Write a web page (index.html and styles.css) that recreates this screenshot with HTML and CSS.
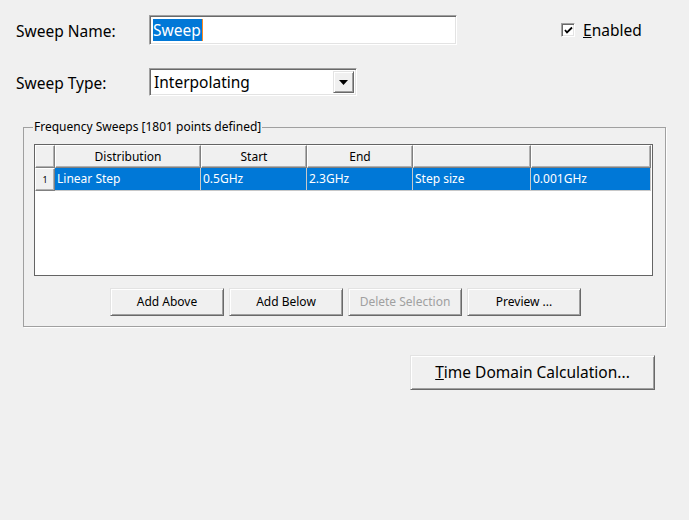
FILE: index.html
```html
<!DOCTYPE html>
<html>
<head>
<meta charset="utf-8">
<link rel="stylesheet" href="styles.css">
</head>
<body>
<div class="dialog">
  <div class="row row-name">
    <span class="label">Sweep Name:</span>
    <div class="edit"><span class="sel">Sweep</span><span class="caret"></span></div>
    <label class="check">
      <span class="box"><svg width="9" height="9" viewBox="0 0 9 9"><path d="M1 4 L3 6.5 L8 1.5" fill="none" stroke="#000" stroke-width="1.8"/></svg></span>
      <span class="check-text"><u>E</u>nabled</span>
    </label>
  </div>
  <div class="row row-type">
    <span class="label">Sweep Type:</span>
    <div class="combo">
      <span class="combo-text">Interpolating</span>
      <span class="drop"><svg width="9" height="5" viewBox="0 0 9 5"><path d="M0 0 H9 L4.5 5 Z" fill="#000"/></svg></span>
    </div>
  </div>
  <fieldset class="group">
    <legend>Frequency Sweeps [1801 points defined]</legend>
    <div class="grid">
      <div class="hdr corner"></div>
      <div class="hdr">Distribution</div>
      <div class="hdr">Start</div>
      <div class="hdr">End</div>
      <div class="hdr"></div>
      <div class="hdr"></div>
      <div class="rowhdr">1</div>
      <div class="cell">Linear Step</div>
      <div class="cell">0.5GHz</div>
      <div class="cell">2.3GHz</div>
      <div class="cell">Step size</div>
      <div class="cell">0.001GHz</div>
    </div>
    <div class="buttons">
      <button class="btn">Add Above</button>
      <button class="btn">Add Below</button>
      <button class="btn disabled">Delete Selection</button>
      <button class="btn">Preview ...</button>
    </div>
  </fieldset>
  <div class="bottom">
    <button class="btn big"><u>T</u>ime Domain Calculation...</button>
  </div>
</div>
</body>
</html>
```
FILE: styles.css
```css
html, body {
  margin: 0;
  padding: 0;
  background: #f0f0f0;
}
body {
  font-family: "Noto Sans", "Open Sans", sans-serif;
  color: #000;
  width: 689px;
  height: 520px;
  overflow: hidden;
}
.dialog {
  padding-top: 15px;
}
.row {
  display: flex;
  align-items: center;
}
.label {
  width: 149px;
  flex-shrink: 0;
  padding-left: 16px;
  font-size: 15.5px;
  box-sizing: border-box;
  position: relative;
  top: 1px;
}
.edit {
  width: 308px;
  height: 30px;
  box-sizing: border-box;
  background: #fff;
  border-top: 1px solid #a0a0a0;
  border-left: 1px solid #a0a0a0;
  border-right: 1px solid #fff;
  border-bottom: 1px solid #fff;
  box-shadow: inset 1px 1px 0 #696969, inset -1px -1px 0 #e3e3e3;
  display: flex;
  align-items: center;
  padding-left: 3px;
}
.sel {
  background: #0078d7;
  color: #fff;
  font-size: 15.5px;
  line-height: 22px;
  padding-right: 1px;
}
.caret {
  width: 1px;
  height: 22px;
  background: #ff8a20;
}
.check {
  margin-left: 104px;
  display: flex;
  align-items: center;
  gap: 8px;
  font-size: 15.5px;
}
.box {
  width: 14px;
  height: 14px;
  box-sizing: border-box;
  background: #fff;
  border-top: 1px solid #a0a0a0;
  border-left: 1px solid #a0a0a0;
  border-right: 1px solid #fff;
  border-bottom: 1px solid #fff;
  box-shadow: inset 1px 1px 0 #696969, inset -1px -1px 0 #e3e3e3;
  display: flex;
  align-items: center;
  justify-content: center;
}
.box svg { display: block; }
.row-type {
  margin-top: 23px;
}
.combo {
  width: 208px;
  height: 28px;
  box-sizing: border-box;
  background: #fff;
  border-top: 1px solid #a0a0a0;
  border-left: 1px solid #a0a0a0;
  border-right: 1px solid #fff;
  border-bottom: 1px solid #fff;
  box-shadow: inset 1px 1px 0 #696969, inset -1px -1px 0 #e3e3e3;
  display: flex;
  align-items: center;
  padding: 2px;
}
.combo-text {
  flex: 1;
  font-size: 15.5px;
  padding-left: 2px;
}
.drop {
  width: 21px;
  height: 22px;
  box-sizing: border-box;
  background: #f0f0f0;
  border-top: 1px solid #e3e3e3;
  border-left: 1px solid #e3e3e3;
  border-right: 1px solid #696969;
  border-bottom: 1px solid #696969;
  box-shadow: inset 1px 1px 0 #fff, inset -1px -1px 0 #a0a0a0;
  display: flex;
  align-items: center;
  justify-content: center;
}
.drop svg { display: block; }
.group {
  margin: 23px 0 0 23px;
  width: 643px;
  box-sizing: border-box;
  border: 1px solid #a0a0a0;
  box-shadow: 1px 1px 0 #fff;
  padding: 9px 12px 10px 10px;
}
.group legend {
  font-size: 12px;
  line-height: 16px;
  padding: 0 1px;
  margin-left: -1px;
}
.grid {
  display: grid;
  grid-template-columns: 20px 146px 106px 106px 118px 120px;
  grid-template-rows: 23px 23px;
  align-content: start;
  width: 619px;
  height: 132px;
  box-sizing: border-box;
  background: #fff;
  border: 1px solid #646464;
  font-size: 12px;
}
.hdr, .rowhdr {
  background: #f0f0f0;
  border-top: 1px solid #fff;
  border-left: 1px solid #fff;
  border-right: 1px solid #808080;
  border-bottom: 1px solid #808080;
  box-shadow: inset -1px -1px 0 #b0b0b0;
  display: flex;
  align-items: center;
  justify-content: center;
  box-sizing: border-box;
  padding-bottom: 1px;
}
.rowhdr {
  font-size: 9px;
  align-items: flex-start;
  padding-top: 4px;
}
.cell {
  background: #0078d7;
  color: #fff;
  border-right: 1px solid #c8c8c8;
  border-bottom: 1px solid #c8c8c8;
  display: flex;
  align-items: center;
  padding-left: 2px;
  padding-bottom: 1px;
  box-sizing: border-box;
}
.buttons {
  display: flex;
  justify-content: center;
  gap: 5px;
  margin-top: 12px;
  padding-left: 4px;
}
.btn {
  width: 114px;
  height: 28px;
  box-sizing: border-box;
  background: #f0f0f0;
  border-top: 1px solid #e3e3e3;
  border-left: 1px solid #e3e3e3;
  border-right: 1px solid #696969;
  border-bottom: 1px solid #696969;
  box-shadow: inset 1px 1px 0 #fff, inset -1px -1px 0 #a0a0a0;
  font-family: "Noto Sans", "Open Sans", sans-serif;
  font-size: 12px;
  color: #000;
  padding: 0 0 1px 0;
  margin: 0;
}
.btn.disabled {
  color: #a0a0a0;
}
.bottom {
  display: flex;
  justify-content: flex-end;
  margin-top: 28px;
  padding-right: 34px;
}
.btn.big {
  width: 245px;
  height: 35px;
  font-size: 15.5px;
}
```
